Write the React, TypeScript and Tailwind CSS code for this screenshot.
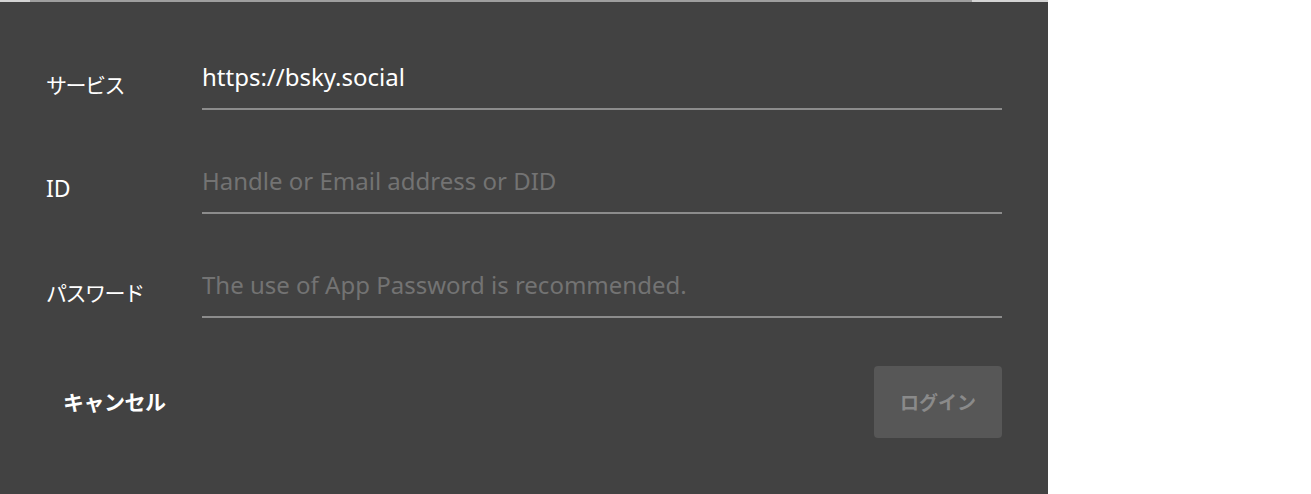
import React, { useState } from "react";

const latin = "font-['Noto_Sans','Noto_Sans_CJK_JP',sans-serif]";
const jp = "font-['Noto_Sans_CJK_JP','Noto_Sans',sans-serif]";

type FieldProps = {
  label: string;
  value: string;
  onChange: (v: string) => void;
  placeholder?: string;
  type?: string;
  kana?: boolean;
};

const Field: React.FC<FieldProps> = ({ label, value, onChange, placeholder, type = "text", kana = true }) => (
  <div className="flex items-start">
    <label
      className={`w-[156px] shrink-0 pt-[11px] leading-[30px] text-white ${
        kana ? `${jp} text-[21px] tracking-[-1.5px]` : `${latin} text-[23px]`
      }`}
    >
      {label}
    </label>
    <input
      type={type}
      value={value}
      placeholder={placeholder}
      onChange={(e) => onChange(e.target.value)}
      className={`${latin} w-[800px] bg-transparent pt-[3px] pb-[15px] text-[24px] leading-[32px] text-white placeholder:text-[#737373] border-b-2 border-[#8c8c8c] outline-none`}
    />
  </div>
);

const App: React.FC = () => {
  const [service, setService] = useState("https://bsky.social");
  const [id, setId] = useState("");
  const [password, setPassword] = useState("");

  const canLogin = id !== "" && password !== "";

  return (
    <div className="flex h-[494px] w-full overflow-hidden bg-white">
      <div className="flex w-[1048px] flex-col">
        <div className="flex h-[2px] shrink-0 bg-[#d4d4d4]">
          <div className="ml-[30px] w-[942px] bg-[#9e9e9e]" />
        </div>
        <div className="flex flex-1 flex-col bg-[#424242] pl-[46px] pr-[46px] pt-[56px]">
          <div className="flex flex-col gap-[52px]">
            <Field label="サービス" value={service} onChange={setService} />
            <Field label="ID" kana={false} value={id} onChange={setId} placeholder="Handle or Email address or DID" />
            <Field
              label="パスワード"
              value={password}
              onChange={setPassword}
              type="password"
              placeholder="The use of App Password is recommended."
            />
          </div>
          <div className="mt-[48px] flex items-center justify-between">
            <button className={`${jp} h-[72px] px-[17px] text-[21px] tracking-[-0.5px] font-bold text-white`}>
              キャンセル
            </button>
            <button
              disabled={!canLogin}
              className={`${jp} h-[72px] w-[128px] rounded-[4px] text-[19px] font-bold ${
                canLogin ? "bg-[#1e88e5] text-white" : "bg-[#575757] text-[#8a8a8a]"
              }`}
            >
              ログイン
            </button>
          </div>
        </div>
      </div>
    </div>
  );
};

export default App;
